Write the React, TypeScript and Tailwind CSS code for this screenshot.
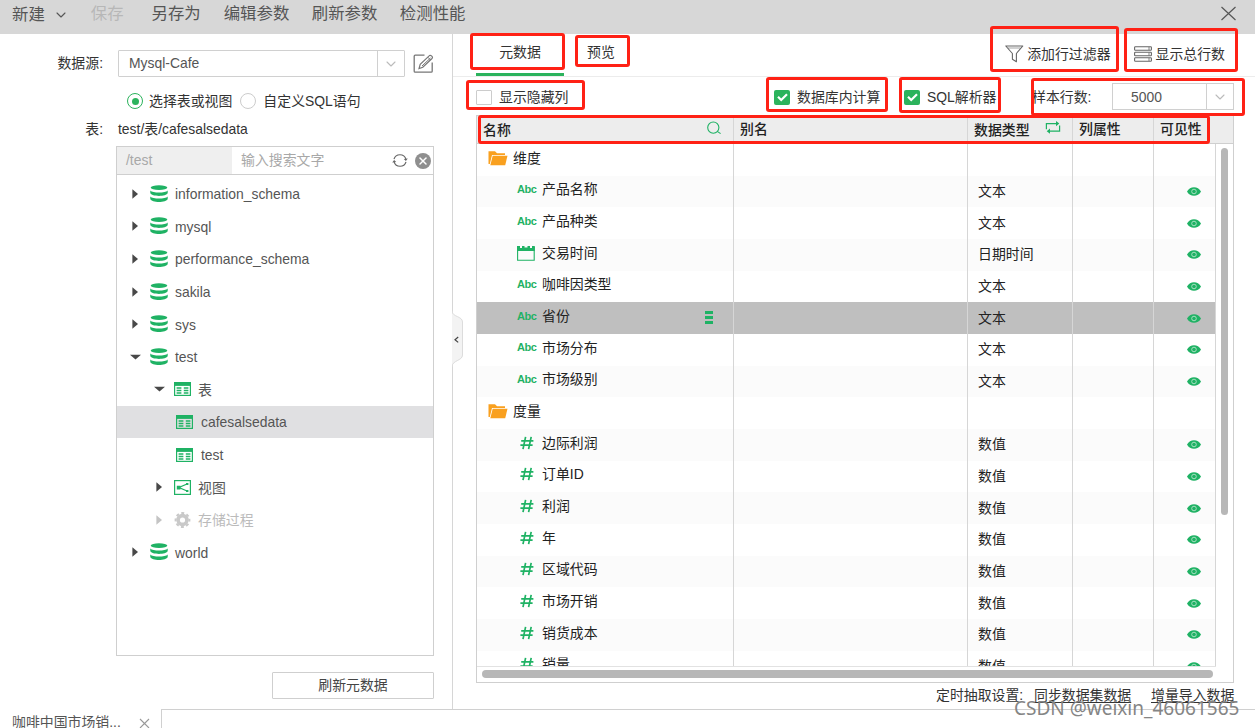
import type { ReactNode } from "react";
import { ChevronDown, X } from "lucide-react";

type TreeNode = {
  label: string;
  level: 0 | 1 | 2;
  icon: "db" | "table" | "view" | "gear";
  open?: boolean;
  selected?: boolean;
  disabled?: boolean;
};

const treeNodes: TreeNode[] = [
  { label: "information_schema", level: 0, icon: "db" },
  { label: "mysql", level: 0, icon: "db" },
  { label: "performance_schema", level: 0, icon: "db" },
  { label: "sakila", level: 0, icon: "db" },
  { label: "sys", level: 0, icon: "db" },
  { label: "test", level: 0, icon: "db", open: true },
  { label: "表", level: 1, icon: "table", open: true },
  { label: "cafesalsedata", level: 2, icon: "table", selected: true },
  { label: "test", level: 2, icon: "table" },
  { label: "视图", level: 1, icon: "view" },
  { label: "存储过程", level: 1, icon: "gear", disabled: true },
  { label: "world", level: 0, icon: "db" },
];

type Field = {
  name: string;
  kind: "folder" | "text" | "date" | "number";
  type?: string;
  selected?: boolean;
};

const fields: Field[] = [
  { name: "维度", kind: "folder" },
  { name: "产品名称", kind: "text", type: "文本" },
  { name: "产品种类", kind: "text", type: "文本" },
  { name: "交易时间", kind: "date", type: "日期时间" },
  { name: "咖啡因类型", kind: "text", type: "文本" },
  { name: "省份", kind: "text", type: "文本", selected: true },
  { name: "市场分布", kind: "text", type: "文本" },
  { name: "市场级别", kind: "text", type: "文本" },
  { name: "度量", kind: "folder" },
  { name: "边际利润", kind: "number", type: "数值" },
  { name: "订单ID", kind: "number", type: "数值" },
  { name: "利润", kind: "number", type: "数值" },
  { name: "年", kind: "number", type: "数值" },
  { name: "区域代码", kind: "number", type: "数值" },
  { name: "市场开销", kind: "number", type: "数值" },
  { name: "销货成本", kind: "number", type: "数值" },
  { name: "销量", kind: "number", type: "数值" },
];

const DatabaseIcon = () => (
  <svg width="18" height="18" viewBox="0 0 18 18" fill="#1fb264">
    <ellipse cx="9" cy="2.6" rx="8.3" ry="2.3" />
    <path d="M0.3 5.4C2.5 8.2 15.5 8.2 17.7 5.4V8.1C16.5 11.9 1.5 11.9 0.3 8.1Z" />
    <path d="M0.3 11.4C2.5 14.1 15.5 14.1 17.7 11.4V14C16.5 18 1.5 18 0.3 14Z" />
  </svg>
);

const TableIcon = () => (
  <svg width="17" height="14" viewBox="0 0 17 14" fill="none" stroke="#1fb264">
    <rect x="0.6" y="0.6" width="15.8" height="12.8" strokeWidth="1.2" />
    <path d="M0 2H17" strokeWidth="3.8" />
    <path d="M2.6 6H7.4M2.6 8.5H7.4M2.6 11H7.4M9.8 6H14.4M9.8 8.5H14.4M9.8 11H14.4" strokeWidth="1.5" />
  </svg>
);

const ViewIcon = () => (
  <svg width="17" height="15" viewBox="0 0 17 15" fill="none" stroke="#1fb264">
    <rect x="0.6" y="0.6" width="15.8" height="13.8" strokeWidth="1.2" />
    <path d="M13 4L5 7.5L13 11" strokeWidth="1.3" />
    <path d="M2.8 5.8H6.5V9.4H2.8ZM12 3H14.4V5H12ZM12 10H14.4V12H12Z" fill="#1fb264" stroke="none" />
  </svg>
);

const GearIcon = () => (
  <svg width="17" height="16" viewBox="0 0 17 16" fill="none" stroke="#c9c9c9">
    <circle cx="8.5" cy="8" r="4.4" strokeWidth="3.6" />
    <circle cx="8.5" cy="8" r="6.9" strokeWidth="2" strokeDasharray="3 2.42" strokeDashoffset="1.5" />
  </svg>
);

const FolderIcon = () => (
  <svg width="20" height="16" viewBox="0 0 20 16">
    <path d="M0.5 14V1.2H7L9 3.2H17V5H4L1.8 14Z" fill="#f9a01f" />
    <path d="M4.7 5.8H19.5L17.2 15.3H2.3Z" fill="#f9a01f" />
  </svg>
);

const CalendarIcon = () => (
  <svg width="18" height="16" viewBox="0 0 18 16">
    <path d="M0.6 2V15.2H17.2V2" fill="none" stroke="#1fb264" strokeWidth="1.1" />
    <path d="M0 1H3V3H5V1H7.5V2.5H10.5V1H13V3H15V1H17.8V6H0Z" fill="#1fb264" />
  </svg>
);

const EyeIcon = () => (
  <svg width="14" height="9" viewBox="0 0 14 9">
    <path d="M0 4.5C3-1.3 11-1.3 14 4.5C11 10.3 3 10.3 0 4.5Z" fill="#1fb264" />
    <circle cx="7" cy="4.5" r="2.3" fill="none" stroke="#a5dfbf" strokeWidth="1" />
  </svg>
);

const FilterIcon = () => (
  <svg width="19" height="18" viewBox="0 0 19 18" fill="none" stroke="#666" strokeWidth="1.1">
    <path d="M0.8 1H17.8L11.4 8.5V16.8L7.4 14.3V8.5Z" strokeLinejoin="round" />
    <path d="M3 3H15.5" strokeWidth="0.6" />
  </svg>
);

const RowsIcon = () => (
  <svg width="18" height="16" viewBox="0 0 18 16" fill="none" stroke="#666" strokeWidth="1.1">
    <rect x="0.6" y="0.8" width="16.8" height="3.4" rx="0.8" />
    <rect x="0.6" y="6.3" width="16.8" height="3.4" rx="0.8" />
    <rect x="0.6" y="11.8" width="16.8" height="3.4" rx="0.8" />
    <path d="M15 1V4M15 6.5V9.5M15 12V15" strokeWidth="0.8" />
  </svg>
);

const EditIcon = () => (
  <svg width="21" height="20" viewBox="0 0 21 20" fill="none" stroke="#777" strokeWidth="1.3">
    <path d="M11.5 1.2H2.2Q1.2 1.2 1.2 2.2V17.2Q1.2 18.2 2.2 18.2H18.2Q19.2 18.2 19.2 17.2V8.5" />
    <path d="M6 14.6L7.2 10.3L16.4 1.6Q17.4 0.9 18.5 1.9L19.2 2.7Q19.9 3.6 19 4.5L9.8 13.2Z" strokeWidth="1.2" />
    <path d="M9 12L17.5 4M14.8 3.2L17.6 6" strokeWidth="1" />
  </svg>
);

const RefreshIcon = () => (
  <svg width="16" height="15" viewBox="0 0 16 15" fill="none" stroke="#666" strokeWidth="1.2">
    <path d="M2 6.2A6.2 6.2 0 0 1 13.9 6.2M14 8.8A6.2 6.2 0 0 1 2.1 8.8" />
    <path d="M15.8 5.6L13.9 8L11.8 6ZM0.2 9.4L2.1 7L4.2 9Z" fill="#666" stroke="none" />
  </svg>
);

const SwapIcon = () => (
  <svg width="16" height="13" viewBox="0 0 16 13" fill="none" stroke="#1fb264" strokeWidth="1.2">
    <path d="M1.4 8.2V2.6H12M14.6 4.6V10.2H4" />
    <path d="M11 0L14.3 2.6L11 5.2ZM5 7.6L1.7 10.2L5 12.8Z" fill="#1fb264" stroke="none" />
  </svg>
);

const nodeIcons = {
  db: <DatabaseIcon />,
  table: <TableIcon />,
  view: <ViewIcon />,
  gear: <GearIcon />,
};

const Arrow = ({ open, disabled }: { open?: boolean; disabled?: boolean }) => (
  <svg width="12" height="10" viewBox="0 0 12 10" fill={disabled ? "#c4c4c4" : "#484848"}>
    {open ? <path d="M0 2.8H11L5.5 7.6Z" /> : <path d="M2.4 0.2L8 5L2.4 9.8Z" />}
  </svg>
);

const Checked = () => (
  <div className="mt-px w-4 h-[15px] rounded-[2px] bg-[#2bb35c] flex items-center justify-center">
    <svg width="11" height="9" viewBox="0 0 11 9" fill="none" stroke="#fff" strokeWidth="2.2">
      <path d="M1 3.8L4.2 7L10 1.2" />
    </svg>
  </div>
);

const FieldIcon = ({ kind }: { kind: Field["kind"] }) => {
  if (kind === "date") return <CalendarIcon />;
  if (kind === "number") {
    return (
      <svg width="14" height="14" viewBox="0 0 14 14" fill="none" stroke="#1fb264" strokeWidth="1.7">
        <path d="M5.6 0.8L3 13.2M11.2 0.8L8.6 13.2M1.2 4.8H13.4M0.4 9.2H12.6" />
      </svg>
    );
  }
  return <span className="text-[11px] font-bold leading-none tracking-[-0.5px] text-[#1fb264]">Abc</span>;
};

const Cell = ({ width, children }: { width: string; children?: ReactNode }) => (
  <div className={`${width} h-full shrink-0 border-r border-[#d6d6d6] flex items-center`}>{children}</div>
);

const TreeRow = ({ node }: { node: TreeNode }) => {
  const indent = node.level === 0 ? "pl-[13px]" : node.level === 1 ? "pl-[37px]" : "pl-[59px]";
  return (
    <div
      className={`h-[32.6px] flex items-center ${indent} ${node.selected ? "bg-[#e0e0e2]" : ""} ${
        node.disabled ? "text-[#bbb]" : "text-[#555]"
      }`}
    >
      {node.level < 2 && (
        <div className="w-5">
          <Arrow open={node.open} disabled={node.disabled} />
        </div>
      )}
      <div className={node.level === 1 ? "w-6" : "w-[25px]"}>{nodeIcons[node.icon]}</div>
      <span className="pt-px">{node.label}</span>
    </div>
  );
};

const FieldRow = ({ field, striped }: { field: Field; striped: boolean }) => (
  <div
    className={`h-[31.67px] shrink-0 flex items-center ${
      field.selected ? "bg-[#bfbfbf]" : striped ? "bg-[#fbfbfb]" : "bg-white"
    }`}
  >
    <Cell width="w-[257px]">
      {field.kind === "folder" ? (
        <div className="flex items-center pl-[11px] pb-[4px] gap-[5px]">
          <FolderIcon />
          <span>{field.name}</span>
        </div>
      ) : (
        <div className="flex flex-1 items-center pb-[4px] pl-10">
          <div className={`w-[25px] flex ${field.kind === "number" ? "pl-[3px]" : ""}`}>
            <FieldIcon kind={field.kind} />
          </div>
          <span className="flex-1">{field.name}</span>
          {field.selected && (
            <div className="mt-[3px] mr-5 flex flex-col gap-[2px]">
              <div className="w-2 h-[3px] bg-[#1fb264]" />
              <div className="w-2 h-[3px] bg-[#1fb264]" />
              <div className="w-2 h-[3px] bg-[#1fb264]" />
            </div>
          )}
        </div>
      )}
    </Cell>
    <Cell width="w-[234px]" />
    <Cell width="w-[105px]">
      <span className="pl-[10px] pb-px">{field.type}</span>
    </Cell>
    <Cell width="w-[81px]" />
    <Cell width="w-[62px]">
      {field.type && (
        <div className="pl-[33px]">
          <EyeIcon />
        </div>
      )}
    </Cell>
  </div>
);

// Red frames drawn over the screen to point out the main controls
const highlights = [
  "left-[470px] top-[33px] w-[95px] h-[37px]",
  "left-[575px] top-[35px] w-[55px] h-[32px]",
  "left-[466px] top-[80px] w-[119px] h-[30px]",
  "left-[990px] top-[26px] w-[129px] h-[46px]",
  "left-[1124px] top-[28px] w-[114px] h-[44px]",
  "left-[766px] top-[77px] w-[122px] h-[35px]",
  "left-[899px] top-[77px] w-[102px] h-[36px]",
  "left-[1031px] top-[78px] w-[214px] h-[38px]",
  "left-[478px] top-[115px] w-[732px] h-[29px]",
];

export default function App() {
  return (
    <div className="relative w-[1255px] h-[728px] overflow-hidden bg-white flex flex-col text-[13.9px] leading-5 text-[#333] whitespace-nowrap font-['Liberation_Sans','Noto_Sans_CJK_SC',sans-serif]">
      {/* Toolbar */}
      <div className="h-[34px] shrink-0 bg-[#d7d7d7] flex items-center pl-3 pr-[18px] pb-[8px] text-[16.4px] text-[#555]">
        <span className="pt-px">新建</span>
        <ChevronDown className="ml-[8px] mt-[3px] w-4 h-4" strokeWidth={1.6} />
        <span className="ml-[22px] text-[#b7b7b7]">保存</span>
        <span className="ml-7">另存为</span>
        <span className="ml-[23px]">编辑参数</span>
        <span className="ml-[22.5px]">刷新参数</span>
        <span className="ml-[22.5px]">检测性能</span>
        <svg className="ml-auto" width="17" height="15" viewBox="0 0 17 15" fill="none" stroke="#555" strokeWidth="1.2">
          <path d="M1.5 1L15.5 14M15.5 1L1.5 14" />
        </svg>
      </div>

      <div className="h-[676px] shrink-0 flex">
        {/* Data source panel */}
        <div className="w-[453px] shrink-0 border-r border-[#d6d6d6] pt-4">
          <div className="flex items-center h-[27px]">
            <span className="w-[103px] text-right pb-0.5">数据源:</span>
            <div className="ml-[15px] w-[287px] h-[27px] border border-[#d0d0d0] rounded-[1px] flex items-center text-[#555]">
              <span className="flex-1 pl-[10px] pb-0.5">Mysql-Cafe</span>
              <div className="w-[27px] h-full border-l border-[#d0d0d0] flex items-center justify-center">
                <ChevronDown className="w-4 h-4 text-[#bbb]" strokeWidth={1.6} />
              </div>
            </div>
            <div className="ml-2">
              <EditIcon />
            </div>
          </div>

          <div className="mt-[14px] flex items-center h-5 pl-[127px]">
            <div className="w-4 h-4 rounded-full border border-[#2bb35c] flex items-center justify-center">
              <div className="w-[7px] h-[7px] rounded-full bg-[#2bb35c]" />
            </div>
            <span className="ml-1.5">选择表或视图</span>
            <div className="ml-2 w-4 h-4 rounded-full border border-[#ccc]" />
            <span className="ml-[7px]">自定义SQL语句</span>
          </div>

          <div className="mt-[8px] flex h-5">
            <span className="w-[103px] text-right">表:</span>
            <span className="ml-[15px]">test/表/cafesalsedata</span>
          </div>

          <div className="mt-[7px] ml-[116px] w-[318px] h-[510px] border border-[#cfcfcf]">
            <div className="h-[28px] border-b border-[#cfcfcf] flex items-center text-[#a8a8a8]">
              <div className="w-[115px] h-full bg-[#efefef] flex items-center pl-[9px] pb-px">/test</div>
              <span className="flex-1 pl-[9px] pb-px">输入搜索文字</span>
              <RefreshIcon />
              <div className="ml-[7px] mr-0.5 w-4 h-4 rounded-full bg-[#8f8f8f] flex items-center justify-center">
                <X className="w-3 h-3 text-white" strokeWidth={3} />
              </div>
            </div>
            <div className="pt-[2.5px]">
              {treeNodes.map((node, i) => (
                <TreeRow key={i} node={node} />
              ))}
            </div>
          </div>

          <button className="mt-4 ml-[272px] w-[162px] h-[27px] border border-[#cfcfcf] rounded-[1px] flex items-center justify-center pb-0.5 text-[#444]">
            刷新元数据
          </button>
        </div>

        {/* Metadata panel */}
        <div className="flex-1 min-w-0">
          <div className="h-[43px] border-b border-[#ececec] flex pl-[23px]">
            <div className="w-[88px] border-b-[3px] border-[#2bb35c] flex items-center justify-center pb-[3px]">元数据</div>
            <div className="w-[74px] flex items-center justify-center pb-[6px]">预览</div>
            <div className="ml-auto flex items-center pb-[3px] pr-[30px]">
              <FilterIcon />
              <span className="ml-[3px]">添加行过滤器</span>
              <div className="ml-[23px] flex items-center">
                <RowsIcon />
                <span className="ml-1">显示总行数</span>
              </div>
            </div>
          </div>

          <div className="h-[38px] flex items-center pl-[23px] pr-[21px] pt-[1px]">
            <div className="mt-[2px] w-4 h-[15px] border border-[#ccc] rounded-[1px]" />
            <span className="ml-[7px] w-[275px]">显示隐藏列</span>
            <Checked />
            <span className="ml-[7px] w-[107px]">数据库内计算</span>
            <Checked />
            <span className="ml-[7px]">SQL解析器</span>
            <span className="ml-auto w-[80px]">样本行数:</span>
            <div className="w-[122px] h-[27px] border border-[#d0d0d0] flex items-center text-[#555]">
              <span className="flex-1 pl-[18px]">5000</span>
              <div className="w-[27px] h-full border-l border-[#d0d0d0] flex items-center justify-center">
                <ChevronDown className="w-4 h-4 text-[#bbb]" strokeWidth={1.6} />
              </div>
            </div>
          </div>

          <div className="ml-[23px] w-[758px] h-[568px] border border-[#cfcfcf] flex flex-col text-[#222]">
            <div className="h-[28px] shrink-0 bg-[#ededed] border-b border-[#cfcfcf] flex font-medium">
              <Cell width="w-[257px]">
                <span className="flex-1 pl-1.5">名称</span>
                <svg className="mr-3 mb-1" width="14" height="14" viewBox="0 0 14 14" fill="none" stroke="#1fb264" strokeWidth="1.1">
                  <circle cx="6.3" cy="6.6" r="5.6" />
                  <path d="M10.3 10.4L13.6 12.6" />
                </svg>
              </Cell>
              <Cell width="w-[234px]">
                <span className="pl-1.5 pb-0.5">别名</span>
              </Cell>
              <Cell width="w-[105px]">
                <span className="flex-1 pl-1.5">数据类型</span>
                <div className="mr-[11px] mb-1">
                  <SwapIcon />
                </div>
              </Cell>
              <Cell width="w-[81px]">
                <span className="pl-1.5 pb-0.5">列属性</span>
              </Cell>
              <div className="flex items-center pl-1.5 pb-0.5">可见性</div>
            </div>
            <div className="h-[522px] shrink-0 flex overflow-hidden">
              <div className="w-[739px] flex flex-col">
                {fields.map((field, i) => (
                  <FieldRow key={i} field={field} striped={i % 2 === 1} />
                ))}
              </div>
              <div className="pt-1 pl-[5px]">
                <div className="w-[7px] h-[367px] rounded-full bg-[#b7b7b7]" />
              </div>
            </div>
            <div className="flex-1 border-t border-[#e2e2e2] pt-[3px] pl-[5px] w-[739px]">
              <div className="w-[731px] h-2 rounded-full bg-[#b7b7b7]" />
            </div>
          </div>

          <div className="mt-[2px] flex pl-[483px]">
            <span className="w-[98px]">定时抽取设置:</span>
            <span className="w-[117px]">
              <span className="underline underline-offset-2">同步数据集数据</span>
            </span>
            <span className="underline underline-offset-2">增量导入数据</span>
          </div>
        </div>
      </div>

      {/* Open documents */}
      <div className="flex-1 flex">
        <div className="w-[161px] shrink-0 flex items-start pl-3 pt-[2px] text-[#555]">
          <span>咖啡中国市场销...</span>
          <svg className="ml-auto mr-[11px] mt-[6px]" width="11" height="11" viewBox="0 0 11 11" fill="none" stroke="#999" strokeWidth="1.1">
            <path d="M1 1L10 10M10 1L1 10" />
          </svg>
        </div>
        <div className="flex-1 -mt-px border-t border-l border-[#d0d0d0] bg-white" />
      </div>

      {/* Panel collapse handle */}
      <svg className="absolute left-[452px] top-[311px]" width="12" height="56" viewBox="0 0 12 56">
        <path d="M0 0C0 6 10.5 5 10.5 11V44C10.5 50 0 49 0 56" fill="#f3f3f3" stroke="#dcdcdc" />
        <path d="M6.2 26L3 28.7L6.2 31.4" fill="none" stroke="#444" strokeWidth="1.2" />
      </svg>

      {highlights.map((box) => (
        <div key={box} className={`absolute rounded-[3px] border-3 border-[#ff2115] ${box}`} />
      ))}

      <div className="absolute left-[1014px] top-[696px] text-[19px] leading-6 text-[#858585] font-['Noto_Sans',sans-serif]">
        CSDN @weixin_46061565
      </div>
    </div>
  );
}
